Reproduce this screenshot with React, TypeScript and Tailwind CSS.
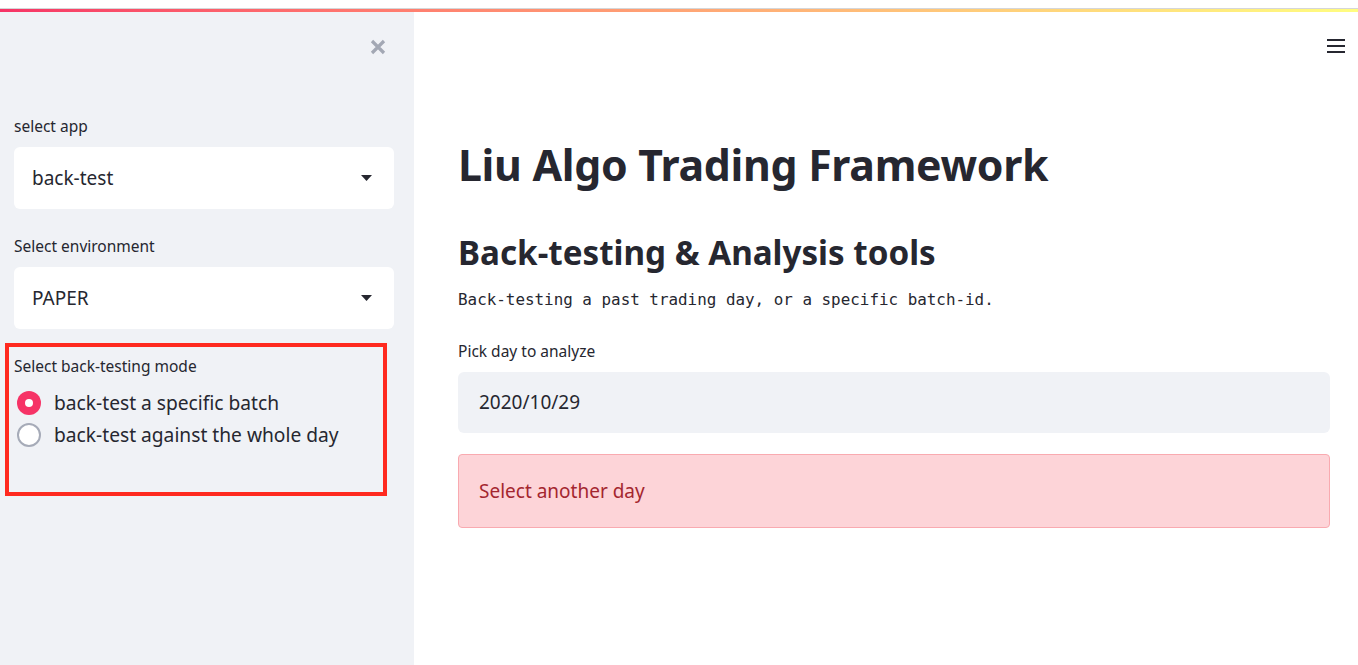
import React from 'react';

const SANS = { fontFamily: '"Noto Sans", "Open Sans", sans-serif' };

function Caret() {
  return (
    <svg width="11" height="6" viewBox="0 0 11 6" className="shrink-0">
      <path d="M0 0 L11 0 L5.5 6 Z" fill="#262730" />
    </svg>
  );
}

function SelectBox({ value }: { value: string }) {
  return (
    <div className="h-[62px] bg-white rounded-[6px] flex items-center justify-between pl-[18px] pr-[22px]">
      <span className="text-[19px] text-[#262730]">{value}</span>
      <Caret />
    </div>
  );
}

function Radio({ label, checked }: { label: string; checked?: boolean }) {
  return (
    <div className="h-[32px] flex items-center">
      {checked ? (
        <div className="ml-[3px] w-[24px] h-[24px] rounded-full bg-[#f63366] flex items-center justify-center">
          <div className="w-[8px] h-[8px] rounded-full bg-white" />
        </div>
      ) : (
        <div className="ml-[3px] w-[24px] h-[24px] rounded-full bg-white border-[2px] border-[#a6abb8]" />
      )}
      <span className="ml-[13px] text-[19.2px] text-[#262730]">{label}</span>
    </div>
  );
}

export default function App() {
  return (
    <div className="w-full h-screen flex flex-col overflow-hidden bg-white" style={SANS}>
      <div className="h-[8px] bg-white" />
      <div className="h-px bg-[#d5d6d8]" />
      <div className="h-[3px] bg-gradient-to-r from-[#f63366] to-[#fffd80]" />

      <div className="flex flex-1 min-h-0">
        {/* sidebar */}
        <aside className="w-[414px] shrink-0 bg-[#f0f2f6] pl-[14px] pr-[20px] flex flex-col">
          <div className="h-[70px] flex items-center justify-end pr-[8px]">
            <svg width="16" height="16" viewBox="0 0 16 16">
              <path d="M2 2 L14 14 M14 2 L2 14" stroke="#a3a8b4" strokeWidth="3.2" strokeLinecap="butt" />
            </svg>
          </div>

          <label className="mt-[34px] leading-[20px] text-[15.5px] text-[#262730]">select app</label>
          <div className="mt-[11px]">
            <SelectBox value="back-test" />
          </div>

          <label className="mt-[27px] leading-[20px] text-[15.5px] text-[#262730]">Select environment</label>
          <div className="mt-[11px]">
            <SelectBox value="PAPER" />
          </div>

          <div className="mt-[14px] -ml-[9px] w-[382px] border-[4px] border-[#ff2a1f] pl-[5px] pt-[9px] pb-[41px]">
            <div className="leading-[20px] text-[15.5px] text-[#262730]">Select back-testing mode</div>
            <div className="mt-[11px]">
              <Radio label="back-test a specific batch" checked />
              <Radio label="back-test against the whole day" />
            </div>
          </div>
        </aside>

        {/* main */}
        <main className="flex-1 relative pl-[44px] pr-[28px] pt-[123px]">
          <div className="absolute top-[27px] right-[13px] flex flex-col gap-[4px]">
            <div className="w-[18px] h-[2px] bg-[#262730]" />
            <div className="w-[18px] h-[2px] bg-[#262730]" />
            <div className="w-[18px] h-[2px] bg-[#262730]" />
          </div>

          <h1 className="leading-[60px] text-[42.8px] font-bold text-[#262730] tracking-[-0.3px]">
            Liu Algo Trading Framework
          </h1>
          <h2 className="mt-[34px] leading-[48px] text-[33.2px] font-bold text-[#262730]">
            Back-testing &amp; Analysis tools
          </h2>
          <p
            className="mt-[11px] leading-[24px] text-[15.9px] text-[#262730]"
            style={{ fontFamily: '"DejaVu Sans Mono", "Liberation Mono", monospace' }}
          >
            Back-testing a past trading day, or a specific batch-id.
          </p>

          <label className="block mt-[29px] leading-[20px] text-[15.5px] text-[#262730]">Pick day to analyze</label>
          <div className="mt-[11px] h-[61px] bg-[#f0f2f6] rounded-[6px] flex items-center pl-[21px]">
            <span className="text-[19px] text-[#262730]">2020/10/29</span>
          </div>

          <div className="mt-[21px] h-[74px] bg-[#fdd4d8] border border-[#f9aab0] rounded-[4px] flex items-center pl-[20px]">
            <span className="text-[19px] text-[#a4262f]">Select another day</span>
          </div>
        </main>
      </div>
    </div>
  );
}
